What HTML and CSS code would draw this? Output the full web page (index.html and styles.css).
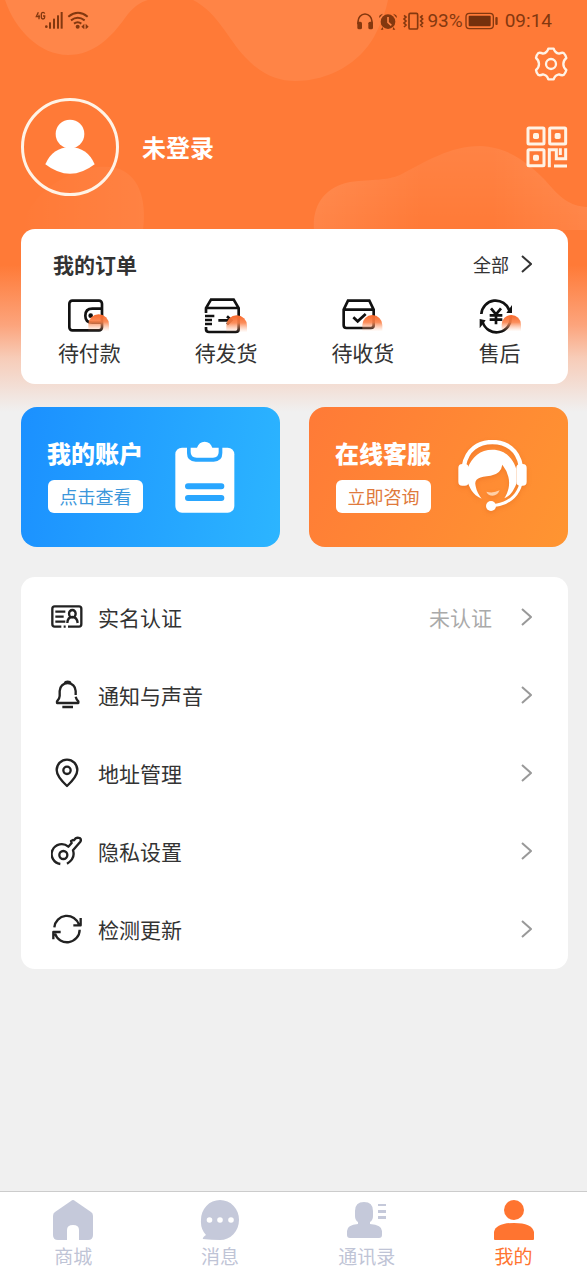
FILE: index.html
```html
<!DOCTYPE html>
<html lang="zh-CN">
<head>
<meta charset="utf-8">
<meta name="viewport" content="width=device-width, initial-scale=1">
<title>我的</title>
<link rel="stylesheet" href="styles.css">
</head>
<body>
<svg class="waves" viewBox="0 0 587 230" preserveAspectRatio="none" aria-hidden="true">
  <defs>
    <linearGradient id="hill" x1="0" y1="0" x2="1" y2="0">
      <stop offset="0" stop-color="#fff" stop-opacity=".08"/>
      <stop offset=".4" stop-color="#fff" stop-opacity="0"/>
      <stop offset=".65" stop-color="#fff" stop-opacity="0"/>
      <stop offset="1" stop-color="#fff" stop-opacity=".08"/>
    </linearGradient>
    <linearGradient id="hillTop" x1="0" y1="0" x2="0" y2="1">
      <stop offset="0" stop-color="#fff" stop-opacity=".07"/>
      <stop offset="1" stop-color="#fff" stop-opacity="0"/>
    </linearGradient>
    <linearGradient id="bump" x1="0" y1="0" x2="1" y2="0">
      <stop offset="0" stop-color="#fff" stop-opacity="0"/>
      <stop offset="1" stop-color="#fff" stop-opacity=".06"/>
    </linearGradient>
  </defs>
  <path fill="#fff" fill-opacity=".09" d="M5 0C15 30 40 55 68 55C95 55 112 36 125 18C132 8 140 2 148 0Z"/>
  <path fill="#fff" fill-opacity=".08" d="M193 0C218 13 228 39 245 57C262 75 278 81 295 81C330 81 360 62 374 37C382 22 386 10 388 0Z"/>
  <path fill="url(#bump)" d="M20 230C30 190 80 160 116 168C138 174 147 198 143 230Z"/>
  <path fill="url(#hill)" d="M314 230C312 205 325 187 350 182C375 179 385 181 400 175C425 162 450 146 480 146C510 147 530 165 545 180C560 198 570 206 587 207V230Z"/>
  <path fill="url(#hillTop)" d="M314 230C312 205 325 187 350 182C375 179 385 181 400 175C425 162 450 146 480 146C510 147 530 165 545 180C560 198 570 206 587 207V230Z"/>
</svg>

<header class="status">
  <svg width="54" height="20" viewBox="105 30 162 60" aria-hidden="true">
    <g fill="none" stroke="#84380f" stroke-width="4"><path d="M115 37l-6 13h11M117 44v14M134 41q-1-4-5-4t-5 5v10q0 5 5 5t5-5v-4h-5"/></g>
    <g fill="#84380f"><circle cx="139" cy="80" r="4"/><rect x="147" y="67" width="6" height="19"/><rect x="159" y="56" width="6" height="30"/><rect x="171" y="46" width="6" height="40"/><rect x="182" y="36" width="6" height="50"/><circle cx="233" cy="80" r="6"/><path d="M253 71v17l-9-8zM257 71v17l9-8z"/></g>
    <g fill="none" stroke="#84380f" stroke-width="6"><path d="M205 50q29-23 58 0M213 61q20-15 41 0M222 71q11-8 22 0"/></g>
  </svg>
  <div class="status-right">
    <svg width="69" height="20" viewBox="80 30 207 60" aria-hidden="true">
      <g fill="none" stroke="#84380f" stroke-width="5"><path d="M86 70V62a21 23 0 0 1 42 0v8"/><rect x="239" y="37" width="26" height="47" rx="4"/><path stroke-width="5" d="M224 43l6 5-6 6 6 6-6 6 6 6-6 6M280 43l-6 5 6 6-6 6 6 6-6 6 6 6"/></g>
      <g fill="#84380f"><rect x="84" y="62" width="14" height="23" rx="5"/><rect x="117" y="62" width="14" height="23" rx="5"/><circle cx="176" cy="62" r="22"/><path d="M150 51q-3-10 11-13zM202 51q3-10-11-13zM160 78l-6 8h8zM192 78l6 8h-8z"/></g>
      <path fill="none" stroke="#ff8547" stroke-width="5" d="M176 48v16l10 9"/>
    </svg>
    <span>93%</span>
    <svg width="34" height="18" viewBox="409 35 102 54" aria-hidden="true">
      <rect x="412" y="39" width="82" height="46" rx="10" fill="none" stroke="#84380f" stroke-width="4"/><rect x="420" y="46" width="66" height="32" rx="3" fill="#74300d"/><rect x="500" y="50" width="7" height="24" rx="3" fill="#84380f"/>
    </svg>
    <time>09:14</time>
  </div>
</header>

<main class="content">
  <div class="tools">
    <button class="icon-btn" aria-label="设置">
      <svg width="34" height="34" viewBox="615 141 102 102" fill="none" stroke="#fff3e6" stroke-width="7" stroke-linejoin="round">
        <path d="M658 146H674Q678 159 690 161Q700 157 704 159Q710 165 712 174Q703 181 703 192Q703 203 712 210Q710 219 704 225Q698 227 690 223Q678 225 674 238H658Q654 225 642 223Q634 227 628 225Q622 219 621 210Q630 203 630 192Q630 181 621 174Q622 165 628 159Q634 157 642 161Q654 159 658 146Z"/>
        <circle cx="666" cy="192" r="15"/>
      </svg>
    </button>
  </div>
  <section class="profile">
    <div class="avatar">
      <svg width="50" height="56" viewBox="135 121 150 168" fill="#fff" aria-hidden="true"><circle cx="210" cy="166" r="43"/><path d="M136 257Q158 206 210 206T284 257Q210 314 136 257Z"/></svg>
    </div>
    <h1 class="name">未登录</h1>
    <button class="icon-btn" aria-label="二维码">
      <svg width="42" height="42" viewBox="698 139 126 126" fill="none" stroke="#fff3e6" stroke-width="9">
        <rect x="704" y="145" width="48" height="48" rx="3"/><rect x="769" y="145" width="48" height="48" rx="3"/><rect x="704" y="210" width="48" height="48" rx="3"/>
        <path d="M768 263V210H789V237H817V206M801 206V226M782 259H821"/>
        <g fill="#fff3e6" stroke="none"><rect x="719" y="160" width="18" height="18" rx="5"/><rect x="784" y="160" width="18" height="18" rx="5"/><rect x="719" y="225" width="18" height="18" rx="5"/></g>
      </svg>
    </button>
  </section>

  <section class="card orders">
    <div class="orders-head">
      <h2>我的订单</h2>
      <a href="#orders">全部
        <svg width="11" height="18" viewBox="0 0 11 18" fill="none" stroke="#333" stroke-width="2"><path d="M1 1l9 8-9 8"/></svg>
      </a>
    </div>
    <nav class="orders-grid" aria-label="我的订单">
      <a href="#pay">
        <svg width="42" height="38" viewBox="147 221 126 114" fill="none" stroke="#111" stroke-width="8">
          <defs><linearGradient id="glow" x1="0" y1="0" x2="0" y2="1"><stop offset="0" stop-color="#f8682b"/><stop offset=".45" stop-color="#fb8149" stop-opacity=".9"/><stop offset="1" stop-color="#ffb08a" stop-opacity="0"/></linearGradient></defs>
          <rect x="151" y="232" width="98" height="89" rx="9"/><path d="M249 256H220Q199 256 199 277T220 298H249"/><circle cx="215" cy="277" r="7" fill="#111" stroke="none"/>
          <path d="M208 324V304A31 31 0 0 1 270 304V324Z" fill="url(#glow)" stroke="none"/>
        </svg>待付款</a>
      <a href="#ship">
        <svg width="44" height="38" viewBox="553 218 132 114" fill="none" stroke="#111" stroke-width="8">
          <path d="M559 266V251L574 226H642L657 251V314Q657 323 648 323H568Q559 323 559 314V308M559 251H657M556 275H584M556 287H577M556 299H577M596 288H632M622 276L635 288L622 300"/>
          <path d="M620 324V304A31 31 0 0 1 682 304V324Z" fill="url(#glow)" stroke="none"/>
        </svg>待发货</a>
      <a href="#receive">
        <svg width="42" height="38" viewBox="131 224 126 114" fill="none" stroke="#111" stroke-width="8">
          <path d="M136 262L149 235H213L226 262V309Q226 317 218 317H144Q136 317 136 309ZM136 262H226M165 285L178 297L202 275"/>
          <path d="M192 327V308A30 30 0 0 1 252 308V327Z" fill="url(#glow)" stroke="none"/>
        </svg>待收货</a>
      <a href="#service">
        <svg width="42" height="38" viewBox="538 224 126 114" fill="none" stroke="#111" stroke-width="8">
          <path d="M545 275A43 43 0 0 1 629 265M633 282A43 43 0 0 1 549 299"/><path fill="#111" stroke="none" d="M637 248V272H620ZM540 318V290L558 294Z"/><path d="M574 258L589 276L604 258M589 276V306M570 279H608M570 292H608"/>
          <path d="M606 327V307A29 29 0 0 1 664 307V327Z" fill="url(#glow)" stroke="none"/>
        </svg>售后</a>
    </nav>
  </section>

  <section class="promos">
    <article class="promo promo-blue">
      <div><h2>我的账户</h2><button>点击查看</button></div>
      <svg width="60" height="72" viewBox="480 124 180 216" aria-hidden="true">
        <rect x="481" y="144" width="177" height="195" rx="20" fill="#fff"/>
        <path d="M516 140V160Q516 186 542 186H596Q622 186 622 160V140Z" fill="#29a6ff"/>
        <path d="M527 144H546Q552 126 569 126T592 144H611V157Q611 174 594 174H545Q527 174 527 157Z" fill="#fff"/>
        <path d="M519 260H619M519 295H619" stroke="#29a6ff" stroke-width="18" stroke-linecap="round"/>
      </svg>
    </article>
    <article class="promo promo-orange">
      <div><h2>在线客服</h2><button>立即咨询</button></div>
      <svg class="headset" width="70" height="74" viewBox="475 115 210 222" aria-hidden="true">
        <g fill="none" stroke="#fff" stroke-linecap="round"><path stroke-width="13" d="M493 192C501 144 536 121 578 121S655 144 663 192"/><path stroke-width="9" d="M664 245Q648 306 575 313"/></g>
        <rect x="476" y="187" width="31" height="65" rx="12" fill="#fff"/><rect x="650" y="187" width="31" height="65" rx="12" fill="#fff"/><circle cx="574" cy="313" r="15" fill="#fff"/>
        <path fill="#fff" d="M503 202C517 164 542 144 578 144C620 144 642 174 650 202V247C640 270 632 282 614 290C626 270 632 250 626 225Q622 207 608 189Q604 217 573 222C540 226 522 229 528 254Q532 274 546 291C518 280 509 256 503 239Z"/>
        <path fill="#ffd0a8" d="M560 270Q580 276 600 266Q593 282 579 282T560 270Z"/>
      </svg>
    </article>
  </section>

  <nav class="card menu" aria-label="设置列表">
    <a href="#identity"><svg width="32" height="32" viewBox="95 62 96 96"><path d="M126 139H106Q99 139 99 131V85Q99 78 106 78H179Q186 78 186 85V131Q186 139 179 139H146M133 139H139M108 94H138M108 109H133M108 124H138M144 128Q145 110 159 110T175 128"/><ellipse cx="159" cy="100" rx="10" ry="11"/></svg><span>实名认证</span><em>未认证</em><svg class="chevron" width="11" height="18" viewBox="0 0 11 18"><path d="M1 1l9 8-9 8"/></svg></a>
    <a href="#notice"><svg width="32" height="32" viewBox="95 297 96 96"><path d="M169 345V333A24 24 0 0 0 121 333V348Q121 356 113 364V369H177V364Q171 358 169 350M137 309Q138 305 145 305T153 309M129 381H161"/></svg><span>通知与声音</span><svg class="chevron" width="11" height="18" viewBox="0 0 11 18"><path d="M1 1l9 8-9 8"/></svg></a>
    <a href="#address"><svg width="32" height="32" viewBox="95 531 96 96"><path d="M143 618Q112 589 112 570A31 31 0 0 1 174 570Q174 589 143 618Z"/><circle cx="143" cy="571" r="11"/></svg><span>地址管理</span><svg class="chevron" width="11" height="18" viewBox="0 0 11 18"><path d="M1 1l9 8-9 8"/></svg></a>
    <a href="#privacy"><svg width="32" height="32" viewBox="95 138 96 96"><path d="M123 225A30 30 0 1 1 147 173L157 162L155 156L161 153L164 154L169 148Q174 145 181 147Q187 151 183 158L161 184Q169 208 143 224"/><circle cx="132" cy="198" r="12"/></svg><span>隐私设置</span><svg class="chevron" width="11" height="18" viewBox="0 0 11 18"><path d="M1 1l9 8-9 8"/></svg></a>
    <a href="#update"><svg width="32" height="32" viewBox="95 374 96 96"><path d="M105 417A38 38 0 0 1 179 409M181 424A38 38 0 0 1 107 436M184 389V411H162M102 453V431H124"/></svg><span>检测更新</span><svg class="chevron" width="11" height="18" viewBox="0 0 11 18"><path d="M1 1l9 8-9 8"/></svg></a>
  </nav>
</main>

<nav class="tabs" aria-label="主导航">
  <a href="#mall"><svg width="40" height="40" viewBox="0 0 40 40"><path d="M18 1Q20-1 22 1L38 12Q40 13 40 16V35Q40 40 35 40H26V30Q26 25 20 25T14 30V40H5Q0 40 0 35V16Q0 13 2 12Z"/></svg>商城</a>
  <a href="#messages"><svg width="40" height="40" viewBox="0 0 40 40"><path d="M20 0A19 19.500 0 0 1 39 20A19 20 0 0 1 20 40Q12 40 3 39Q2 38 6 35A20 20 0 0 1 1 20A19 19.500 0 0 1 20 0Z"/><g fill="#fff"><circle cx="9.500" cy="20" r="2.800"/><circle cx="20" cy="20" r="2.800"/><circle cx="31" cy="20" r="2.800"/></g></svg>消息</a>
  <a href="#contacts"><svg width="40" height="40" viewBox="0 0 40 40"><path d="M8 11Q8 2 17 2T26 11V16Q26 20 23 22V24Q35 25 35 31V35Q35 38 32 38H3Q0 38 0 35V31Q0 25 11 24V22Q8 20 8 16ZM31 4H39V6H31ZM31 10H39V13H31ZM31 16H39V19H31Z"/></svg>通讯录</a>
  <a class="active" href="#me" aria-current="page"><svg width="40" height="40" viewBox="0 0 40 40"><circle cx="20" cy="10" r="10"/><path d="M0 39V32Q2 23 20 23T40 32V39Q40 40 39 40H1Q0 40 0 39Z"/></svg>我的</a>
</nav>
</body>
</html>
```
FILE: styles.css
```css
* { box-sizing: border-box; }

body {
  position: relative;
  display: flex;
  flex-direction: column;
  min-height: 100vh;
  margin: 0;
  color: #333;
  font-family: "Noto Sans CJK SC", sans-serif;
  background: #f0f0f0 linear-gradient(#ff7a37 265px, #fca47c 325px, #f7ccb8 358px, #f3ddd3 384px, #f0f0f0 412px) no-repeat;
}

h1, h2 { margin: 0; }
a { color: inherit; text-decoration: none; }
button { padding: 0; border: 0; font: inherit; }
svg { display: block; flex: none; }

.waves {
  position: absolute;
  top: 0;
  left: 0;
  z-index: -1;
  width: 100%;
  height: 230px;
}

.status {
  display: flex;
  justify-content: space-between;
  align-items: center;
  height: 41px;
  padding: 0 35px;
  color: #84380f;
  font: 19px/24px Roboto, sans-serif;
}
.status > svg { margin-bottom: 2px; }
.status-right { display: flex; align-items: center; gap: 2px; }
.status-right time { margin-left: 4px; }

.content { flex: 1; padding: 0 19px 24px 21px; }

.tools { display: flex; justify-content: flex-end; padding-top: 6px; }
.icon-btn { background: none; }

.profile {
  display: flex;
  align-items: center;
  height: 98px;
  margin: 17px 0 33px;
}
.avatar {
  display: grid;
  place-items: center;
  width: 98px;
  height: 98px;
  border: 3px solid #fff3e6;
  border-radius: 50%;
}
.name {
  flex: 1;
  margin-left: 23px;
  color: #fff;
  font-size: 24px;
  line-height: 36px;
}

.card { background: #fff; border-radius: 14px; }

.orders { height: 155px; padding-top: 19px; }
.orders-head {
  display: flex;
  justify-content: space-between;
  align-items: center;
  height: 32px;
  padding: 0 36px 0 32px;
}
.orders-head h2 { font-size: 21px; line-height: 32px; }
.orders-head a {
  display: flex;
  align-items: center;
  gap: 12px;
  font-size: 18px;
  line-height: 28px;
}
.orders-grid {
  display: grid;
  grid-template-columns: repeat(4, 1fr);
  margin-top: 17px;
  font-size: 21px;
  line-height: 34px;
}
.orders-grid a { display: flex; flex-direction: column; align-items: center; }

.promos {
  display: grid;
  grid-template-columns: 1fr 1fr;
  gap: 29px;
  margin: 23px 0 30px;
}
.promo {
  display: flex;
  justify-content: space-between;
  align-items: center;
  height: 140px;
  padding: 0 45px 0 26px;
  border-radius: 16px;
}
.promo div { padding-bottom: 4px; }
.promo h2 {
  color: #fff;
  font-size: 24px;
  font-weight: 900;
  line-height: 32px;
}
.promo button {
  width: 95px;
  height: 33px;
  margin: 11px 0 0 1px;
  border-radius: 6px;
  background: #fff;
  font-size: 18px;
  line-height: 33px;
}
.promo-blue { background: linear-gradient(100deg, #1b90ff, #2cb5ff); }
.promo-blue button { color: #3c97db; }
.promo-orange { padding-right: 40px; background: linear-gradient(120deg, #ff7a37, #ff9531); }
.promo-orange button { color: #e07a3c; }
.headset { filter: drop-shadow(0 2px 2px #c8501040); }

.menu { padding: 1px 0; }
.menu a {
  display: flex;
  align-items: center;
  height: 78px;
  padding: 0 36px 0 30px;
  font-size: 21px;
  line-height: 32px;
}
.menu svg { fill: none; stroke: #222; stroke-width: 7; stroke-linejoin: round; }
.menu span { flex: 1; margin-left: 15px; }
.menu em { margin-right: 29px; color: #aaa; font-style: normal; }
.menu .chevron { stroke: #999; stroke-width: 2; }

.tabs {
  display: grid;
  grid-template-columns: repeat(4, 1fr);
  height: 84px;
  padding-top: 8px;
  border-top: 1px solid #ccc;
  background: #fff;
  color: #bfc4d6;
  font-size: 19px;
  line-height: 32px;
}
.tabs a { display: flex; flex-direction: column; align-items: center; }
.tabs svg { fill: #c5c9da; }
.tabs .active { color: #ff7430; }
.tabs .active svg { fill: #ff7430; }
```
